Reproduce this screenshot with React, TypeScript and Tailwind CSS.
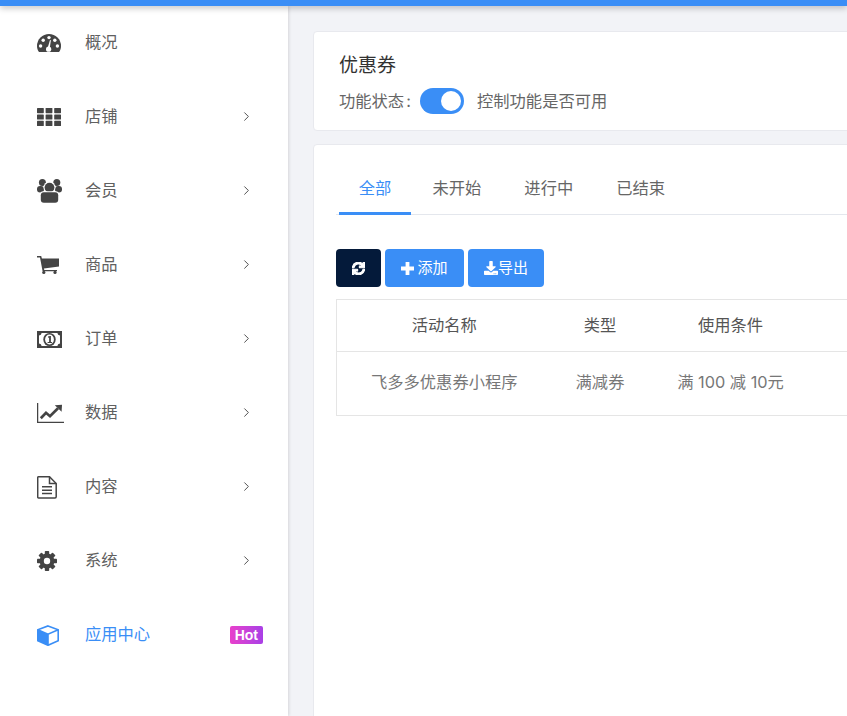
import type { ReactNode } from 'react';
import { ChevronRight } from 'lucide-react';
import { FaSync, FaDownload } from 'react-icons/fa';

interface MenuItem {
    label: string;
    icon: ReactNode;
    arrow?: boolean;
}

const DashboardIcon = () => (
    <svg width="24" height="18" viewBox="0 0 24 18" fill="currentColor">
        <path d="M2 18C.7 16.3 0 14.2 0 12a12 12 0 0 1 24 0c0 2.2-.7 4.3-2 6Z" />
        <g fill="white">
            <circle cx="3.6" cy="12" r="1.7" />
            <circle cx="6.2" cy="6.2" r="1.7" />
            <circle cx="20.4" cy="12" r="1.7" />
            <circle cx="17.8" cy="6.2" r="1.7" />
            <circle cx="12" cy="3.6" r="1.7" />
            <circle cx="11.6" cy="15.2" r="2.6" />
            <path d="M13 6l.9.3-1.2 8-2-.6Z" />
        </g>
    </svg>
);

const GridIcon = () => (
    <svg width="24" height="18" viewBox="0 0 24 18" fill="currentColor">
        {[0, 8.6, 17.2].map((x) =>
            [0, 6.4, 12.8].map((y) => <rect key={`${x}-${y}`} x={x} y={y} width="6.8" height="5.2" rx="0.6" />),
        )}
    </svg>
);

const UsersIcon = () => (
    <svg width="25" height="24" viewBox="0 0 25 24" fill="currentColor">
        <circle cx="5.4" cy="3.6" r="3.5" />
        <circle cx="19.8" cy="3.6" r="3.5" />
        <rect x="0" y="7" width="7" height="6.5" rx="3" />
        <rect x="18" y="7" width="7" height="6.5" rx="3" />
        <circle cx="12.5" cy="8.6" r="6" fill="white" />
        <circle cx="12.5" cy="8.6" r="4.9" />
        <rect x="2.8" y="12.2" width="19.4" height="11.8" rx="3.6" fill="white" />
        <rect x="3.8" y="13.2" width="17.4" height="10.6" rx="3" />
    </svg>
);

const CartIcon = () => (
    <svg width="22" height="18" viewBox="0 0 22 18" fill="currentColor">
        <path d="M0 0h4.2l.7 2.4H22v8.2L6.9 12.4l.4 1.5H20v1.4H5.6L3 1.6H0Z" />
        <circle cx="6.8" cy="16.4" r="1.6" />
        <circle cx="18" cy="16.4" r="1.6" />
    </svg>
);

const MoneyIcon = () => (
    <svg width="25" height="17" viewBox="0 0 25 17" fill="currentColor">
        <rect width="25" height="17" />
        <path
            fill="white"
            d="M4.6 2h15.8a2.8 2.8 0 0 0 2.6 2.6v7.8a2.8 2.8 0 0 0-2.6 2.6H4.6A2.8 2.8 0 0 0 2 12.4V4.6A2.8 2.8 0 0 0 4.6 2Z"
        />
        <ellipse cx="12.5" cy="8.5" rx="6.2" ry="6.6" />
        <ellipse cx="12.5" cy="8.5" rx="4.4" ry="4.9" fill="white" />
        <path d="M11 5.6l2-.6h.9v6h1.2v1.1h-4.500V11h1.500V6.500l-1.100.3Z" />
    </svg>
);

const ChartIcon = () => (
    <svg width="27" height="20" viewBox="0 0 27 20" fill="none" stroke="currentColor">
        <path d="M.6 0v19.4H27" strokeWidth="1.3" />
        <path d="M3.8 15.2 9 9.800l4 3.400 8-8" strokeWidth="2.7" />
        <path d="M17.8 2.200 25 1.800l-.4 7Z" fill="currentColor" stroke="none" />
    </svg>
);

const FileIcon = () => (
    <svg width="20" height="23" viewBox="0 0 20 23" fill="none" stroke="currentColor" strokeWidth="1.5">
        <path d="M1.5.8h11l6.700 6.700v13.200a1.200 1.200 0 0 1-1.200 1.200H1.500a.8.8 0 0 1-.8-.8V1.500a.8.8 0 0 1 .8-.7Z" />
        <path d="M12.500.8v6.700h6.700M5 10.800h10M5 14.200h10M5 17.600h10" />
    </svg>
);

const GearIcon = () => (
    <svg width="20" height="20" viewBox="0 0 20 20" fill="currentColor">
        {[0, 45, 90, 135].map((deg) => (
            <rect key={deg} x="7.8" y="0" width="4.4" height="20" rx="0.8" transform={`rotate(${deg} 10 10)`} />
        ))}
        <circle cx="10" cy="10" r="7.4" />
        <circle cx="10" cy="10" r="3.2" fill="white" />
    </svg>
);

const CubeIcon = () => (
    <svg width="22" height="21" viewBox="0 0 22 21" fill="none" stroke="currentColor" strokeWidth="1.6">
        <path d="M.8 4.800 11 9.200v11L.8 15.700Z" fill="currentColor" stroke="none" />
        <path d="M11 .9 21.200 4.800v10.900L11 20.300.8 15.700V4.800ZM.8 4.800 11 9.200l10.200-4.400M11 9.200v11" />
    </svg>
);

const PlusIcon = () => (
    <svg width="13" height="13" viewBox="0 0 13 13" fill="currentColor">
        <path d="M4.6 0h3.800v4.600H13v3.800H8.400V13H4.600V8.400H0V4.600h4.600Z" />
    </svg>
);

const MENU: MenuItem[] = [
    { label: '概况', icon: <DashboardIcon /> },
    { label: '店铺', icon: <GridIcon />, arrow: true },
    { label: '会员', icon: <UsersIcon />, arrow: true },
    { label: '商品', icon: <CartIcon />, arrow: true },
    { label: '订单', icon: <MoneyIcon />, arrow: true },
    { label: '数据', icon: <ChartIcon />, arrow: true },
    { label: '内容', icon: <FileIcon />, arrow: true },
    { label: '系统', icon: <GearIcon />, arrow: true },
];

const TABS = ['全部', '未开始', '进行中', '已结束'];

export default function App() {
    return (
        <div className="h-screen w-screen overflow-hidden bg-[#f2f3f7] font-['Inter','Noto_Sans_CJK_SC',sans-serif] text-[16.3px]">
            <div className="relative z-10 h-[6px] bg-[#3a8ef6] shadow-[0_2px_6px_rgba(0,0,0,0.25)]" />
            <div className="flex h-[710px]">
                {/* Sidebar */}
                <aside className="w-[288px] shrink-0 bg-white shadow-[1px_0_3px_rgba(0,0,0,0.12)]">
                    {MENU.map((item) => (
                        <div key={item.label} className="flex h-[74px] items-center pl-[37px] pr-[34px] text-[#606060]">
                            <span className="flex w-[48px] items-center text-[#444]">{item.icon}</span>
                            <span className="flex-1 pb-[1px] leading-none">{item.label}</span>
                            {item.arrow && <ChevronRight className="mb-[1px] h-[15px] w-[15px] text-[#444]" strokeWidth={1.5} />}
                        </div>
                    ))}
                    <div className="flex h-[74px] items-center pl-[37px] pr-[25px] text-[#3a8ef6]">
                        <span className="flex w-[48px] items-center">
                            <CubeIcon />
                        </span>
                        <span className="flex-1 pb-[1px] leading-none">应用中心</span>
                        <span className="rounded-[2px] bg-gradient-to-r from-[#e83ecb] to-[#a93fe6] px-[5px] font-['Liberation_Sans',sans-serif] text-[14px] font-bold leading-[18px] text-white">
                            Hot
                        </span>
                    </div>
                </aside>

                {/* Main */}
                <main className="min-w-0 flex-1 pl-[25px] pt-[25px]">
                    <div className="w-[800px] rounded border border-[#e8e9ee] bg-white px-[25px] pb-[16px] pt-[20px]">
                        <h1 className="text-[19px] leading-[28px] text-[#333]">优惠券</h1>
                        <div className="mt-[8px] flex items-center text-[#666]">
                            <span className="w-[81px]">
                                功能状态<span className="ml-[2px]">:</span>
                            </span>
                            <span className="flex h-[26px] w-[44px] items-center justify-end rounded-full bg-[#3a8ef6] pr-[3px]">
                                <span className="h-[20px] w-[20px] rounded-full bg-white" />
                            </span>
                            <span className="ml-[13px]">控制功能是否可用</span>
                        </div>
                    </div>

                    <div className="mt-[13px] h-[700px] w-[800px] rounded border border-[#e8e9ee] bg-white pl-[22px] pt-[23px]">
                        <div className="flex h-[47px] border-b border-[#e4e7ed] text-[#666]">
                            {TABS.map((tab, i) => (
                                <div
                                    key={tab}
                                    className={
                                        i === 0
                                            ? 'relative ml-[3px] h-[47px] w-[72px] border-b-[3px] border-[#3a8ef6] pb-[10px] pt-[8px] text-center leading-[24px] text-[#3a8ef6]'
                                            : 'px-[21.5px] pt-[8px] leading-[24px]'
                                    }
                                >
                                    {tab}
                                </div>
                            ))}
                        </div>

                        <div className="mt-[34px] flex gap-[4px] text-[15px] text-white">
                            <button className="flex h-[38px] w-[45px] items-center justify-center rounded bg-[#041a3a]">
                                <FaSync className="h-[13px] w-[13px]" stroke="currentColor" strokeWidth={40} />
                            </button>
                            <button className="flex h-[38px] w-[79px] items-center justify-center gap-[3px] rounded bg-[#3a8ef6]">
                                <PlusIcon />
                                添加
                            </button>
                            <button className="flex h-[38px] w-[76px] items-center justify-center rounded bg-[#3a8ef6]">
                                <FaDownload className="h-[14px] w-[14px]" />
                                导出
                            </button>
                        </div>

                        <table className="mt-[12px] w-[760px] table-fixed border-collapse border border-[#e5e5e5] text-center">
                            <colgroup>
                                <col className="w-[215px]" />
                                <col className="w-[97px]" />
                                <col className="w-[164px]" />
                                <col />
                            </colgroup>
                            <thead>
                                <tr className="h-[52px] border-b border-[#e5e5e5] text-[#555]">
                                    <th className="pb-[1px] font-normal">活动名称</th>
                                    <th className="pb-[1px] font-normal">类型</th>
                                    <th className="pb-[1px] font-normal">使用条件</th>
                                    <th />
                                </tr>
                            </thead>
                            <tbody>
                                <tr className="h-[64px] text-[#777]">
                                    <td className="pb-[2px]">飞多多优惠券小程序</td>
                                    <td className="pb-[2px]">满减券</td>
                                    <td className="pb-[2px]">满 100 减 10元</td>
                                    <td />
                                </tr>
                            </tbody>
                        </table>
                    </div>
                </main>
            </div>
        </div>
    );
}
